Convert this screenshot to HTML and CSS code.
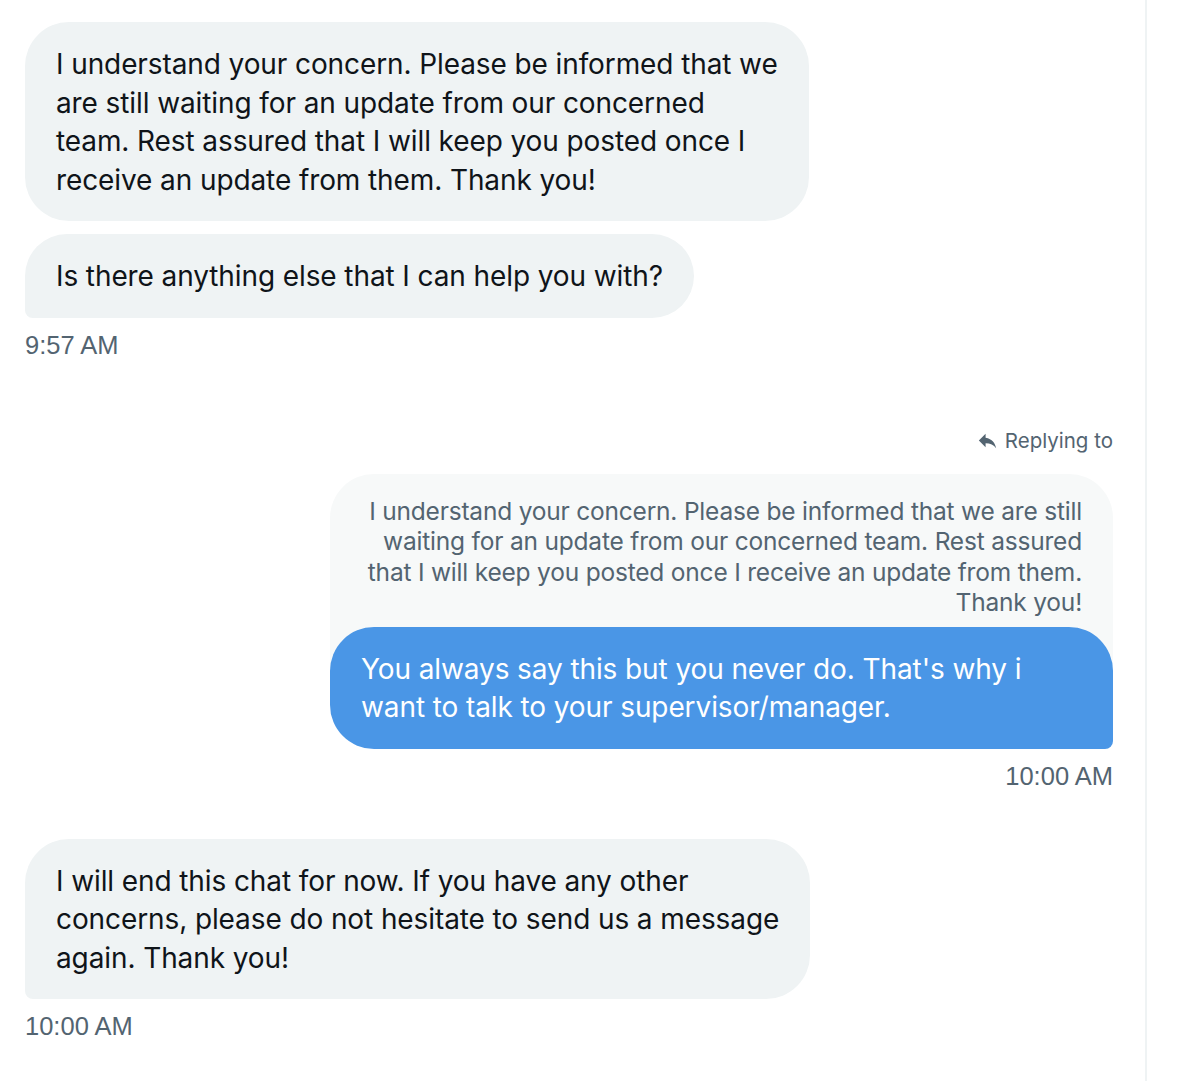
FILE: index.html
```html
<!DOCTYPE html>
<html>
<head>
<meta charset="utf-8">
<link rel="stylesheet" href="styles.css">
</head>
<body>
<div class="chat">
  <div class="group received">
    <div class="bubble first">I understand your concern. Please be informed that we<br>are still waiting for an update from our concerned<br>team. Rest assured that I will keep you posted once I<br>receive an update from them. Thank you!</div>
    <div class="bubble tail">Is there anything else that I can help you with?</div>
    <div class="time">9:57 AM</div>
  </div>

  <div class="group sent">
    <div class="reply-label">
      <svg class="reply-icon" viewBox="0 0 24 24" width="23" height="23" aria-hidden="true"><path d="M10 9V5l-7 7 7 7v-4.1c5 0 8.5 1.6 11 5.1-1-5-4-10-11-11z"/></svg>
      <span>Replying to</span>
    </div>
    <div class="reply-block">
      <div class="quote">I understand your concern. Please be informed that we are still<br>waiting for an update from our concerned team. Rest assured<br>that I will keep you posted once I receive an update from them.<br>Thank you!</div>
      <div class="bubble outgoing">You always say this but you never do. That's why i<br>want to talk to your supervisor/manager.</div>
    </div>
    <div class="time">10:00 AM</div>
  </div>

  <div class="group received last-group">
    <div class="bubble tail">I will end this chat for now. If you have any other<br>concerns, please do not hesitate to send us a message<br>again. Thank you!</div>
    <div class="time">10:00 AM</div>
  </div>
</div>
</body>
</html>
```
FILE: styles.css
```css
* { box-sizing: border-box; }
html, body { margin: 0; padding: 0; background: #ffffff; }
body { width: 1200px; height: 1081px; overflow: hidden; }

.chat {
  width: 1147px;
  min-height: 1081px;
  border-right: 2px solid #eff3f4;
  padding: 22px 32px 0 25px;
  display: flex;
  flex-direction: column;
  font-family: "Inter", "Noto Sans", sans-serif;
  color: #0f1419;
}

.group { display: flex; flex-direction: column; }
.received { align-items: flex-start; }
.sent { align-items: flex-end; margin-top: 67px; }
.last-group { margin-top: 48px; }

.bubble {
  font-size: 28px;
  line-height: 38.5px;
  padding: 23px 31px 22px 31px;
  background: #eff3f4;
  border-radius: 44px;
  max-width: 820px;
  white-space: nowrap;
  letter-spacing: -0.1px;
}
.bubble.tail { border-radius: 44px 44px 44px 8px; }
.bubble + .bubble { margin-top: 13px; }

.time {
  font-family: "Liberation Sans", Arial, sans-serif;
  font-size: 25.5px;
  line-height: 30px;
  color: #536471;
  margin-top: 12px;
}

.reply-label {
  display: flex;
  align-items: center;
  gap: 6px;
  font-size: 20.5px;
  line-height: 28px;
  color: #536471;
}
.reply-icon { fill: #536471; }

.reply-block {
  width: 783px;
  display: flex;
  flex-direction: column;
  margin-top: 19px;
}
.quote {
  background: #f7f9f9;
  border-radius: 44px 44px 0 0;
  color: #536471;
  font-size: 24.5px;
  line-height: 30.5px;
  text-align: right;
  padding: 22px 31px 53px 31px;
  letter-spacing: -0.2px;
}
.bubble.outgoing {
  position: relative;
  margin-top: -44px;
  background: #4a96e6;
  color: #ffffff;
  border-radius: 44px 44px 8px 44px;
  max-width: none;
}
```
